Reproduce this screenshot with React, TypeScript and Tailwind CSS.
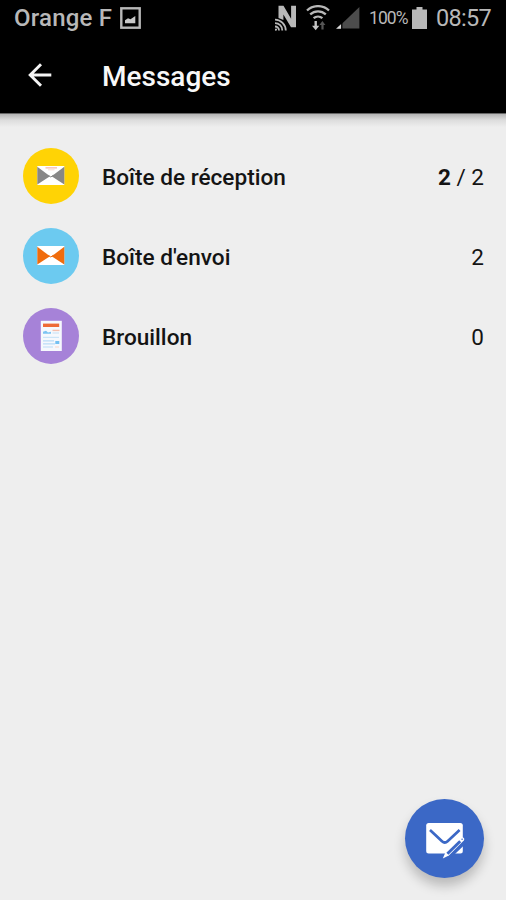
import React from 'react';

interface Folder {
  label: string;
  unread?: number;
  total: number;
  icon: React.ReactNode;
}

function EnvelopeIcon({ bg, side, letter }: { bg: string; side: string; letter?: boolean }) {
  return (
    <svg className="size-14 shrink-0" viewBox="0 0 56 56">
      <circle cx="28" cy="28" r="28" fill={bg} />
      <rect x="14.3" y="18" width="27" height="19" fill="#fff" />
      <path d="M14.3 18.8 27 28.3 14.3 36.6Z" fill={side} />
      <path d="M41.3 18.8 28.6 28.3 41.3 36.6Z" fill={side} />
      <path d="M25.3 27.3 27.8 29 30.3 27.3" fill="none" stroke={side} strokeWidth="1" />
      {letter && (
        <>
          <path d="M22.5 19.9h11.5" stroke="#f3a596" strokeWidth="1" />
          <path d="M25 21.8h6.5" stroke="#f8d0c8" strokeWidth="0.8" />
        </>
      )}
    </svg>
  );
}

function DraftIcon() {
  return (
    <svg className="size-14 shrink-0" viewBox="0 0 56 56">
      <circle cx="28" cy="28" r="28" fill="#a682d8" />
      <rect x="17.8" y="12.8" width="21" height="30.2" fill="#f6f8fd" />
      <rect x="20" y="15.6" width="16.2" height="3.4" fill="#ee6a36" />
      <path d="M29.5 22.4h7" stroke="#f5bfae" strokeWidth="1.4" />
      <path d="M20 25.8v-2l3-1 2 1.6 3-.6v2Z" fill="#7cc3f2" />
      <path d="M29.5 25h6.5" stroke="#c3dff5" strokeWidth="1" />
      <path d="M20 29.4h16" stroke="#cbe4f8" strokeWidth="1.2" />
      <path d="M20 32.8h11M20 35.8h12M20 39h10" stroke="#b9dcf7" strokeWidth="1.2" />
      <path d="M32 39h4" stroke="#f8d5c8" strokeWidth="1" />
      <rect x="32.3" y="33" width="4" height="3" fill="#74c0f2" />
    </svg>
  );
}

const folders: Folder[] = [
  {
    label: 'Boîte de réception',
    unread: 2,
    total: 2,
    icon: <EnvelopeIcon bg="#ffd305" side="#878787" letter />,
  },
  { label: "Boîte d'envoi", total: 2, icon: <EnvelopeIcon bg="#6ccaf0" side="#f06c0c" /> },
  { label: 'Brouillon', total: 0, icon: <DraftIcon /> },
];

function StatusBar() {
  return (
    <div className="flex h-[35px] items-center pl-3.5 pr-[14px] text-[#b8b8b8]">
      <span className="w-[106px] whitespace-nowrap text-[24px] leading-none font-medium tracking-[0.2px]">
        Orange F
      </span>
      <svg className="h-[22px] w-[21px]" viewBox="0 0 21 22">
        <rect x="1.3" y="1.3" width="18.4" height="19.4" fill="none" stroke="#b8b8b8" strokeWidth="2.4" />
        <path d="M5 16.3v-3l3-2 2.5 1 4.8-3.3v7.3Z" fill="#c8c8c8" />
      </svg>

      <div className="ml-auto flex items-center">
        {/* NFC */}
        <svg className="h-[26px] w-[23px]" viewBox="0 0 23 26">
          <path d="M3.5 13V.8h5l7.6 13V.8h4.9v21.4h-5L8.4 9.4V15Z" fill="#b8b8b8" />
          <g fill="none" stroke="#b8b8b8" strokeWidth="1.8">
            <path d="M0 14.6a11 11 0 0 1 10.8 10.8" />
            <path d="M0 18.1a7.3 7.3 0 0 1 7.3 7.3" />
            <path d="M0 21.5a4 4 0 0 1 4 4" />
          </g>
          <circle cx="1" cy="24.6" r="1.1" fill="#b8b8b8" />
        </svg>
        {/* Wi-Fi */}
        <svg className="ml-[8px] mr-px h-[26px] w-[24px]" viewBox="0 0 24 26">
          <g fill="none" stroke="#b8b8b8" strokeWidth="2.3">
            <path d="M1 5.5a16 16 0 0 1 22 0" />
            <path d="M4.2 9.4a11.5 11.5 0 0 1 15.6 0" />
            <path d="M7.6 13.2a6.8 6.8 0 0 1 8.8 0" />
          </g>
          <path d="M8.5 16h2.4v4.7h2.4l-3.6 4.6-3.7-4.6h2.5Z" fill="#c4c4c4" />
          <path d="M15.4 24.5v-4.4h-2l3-4 3 4h-1.8v4.4Z" fill="#565656" />
        </svg>
        {/* Signal */}
        <svg className="ml-[5px] h-[24px] w-[24px]" viewBox="0 0 24 24">
          <path d="M1 22.6 23.4 1v21.6Z" fill="#4c4c4c" />
          <path d="M0 22.8 5.2 18v4.8Z" fill="#d8d8d8" />
          <path d="M5.8 17v6" stroke="#000" strokeWidth="1.2" />
        </svg>
        <span className="ml-[9px] w-[43px] whitespace-nowrap pt-[3px] text-[17.5px] leading-none tracking-[-0.9px]">
          100%
        </span>
        {/* Battery */}
        <svg className="h-[22px] w-[15px]" viewBox="0 0 15 22">
          <path d="M4.5 0h6v2.6H15V22H0V2.6h4.5Z" fill="#b8b8b8" />
        </svg>
        <span className="ml-[9px] w-[56px] whitespace-nowrap pt-[2px] text-[23.5px] leading-none tracking-[-0.7px]">
          08:57
        </span>
      </div>
    </div>
  );
}

function AppBar() {
  return (
    <div className="flex h-[78px] items-center pt-[2px] pl-[28px]">
      <button className="w-[74px]" aria-label="Retour">
        <svg className="h-[24px] w-[24px]" viewBox="0 0 24 24">
          <path
            d="M23.3 12H2.5M13 1.3 2.2 12 13 22.7"
            fill="none"
            stroke="#f4f4f4"
            strokeWidth="2.9"
          />
        </svg>
      </button>
      <h1 className="pt-[4px] text-[28px] leading-none font-medium text-[#f8f8f8]">Messages</h1>
    </div>
  );
}

function FolderRow({ folder }: { folder: Folder }) {
  return (
    <li className="flex h-20 items-center pr-[22px] pl-[23px]">
      {folder.icon}
      <span className="ml-[23px] flex-1 pt-[3px] text-[22.6px] font-medium">{folder.label}</span>
      <span className="pt-[3px] text-[22.5px]">
        {folder.unread !== undefined && (
          <>
            <b className="font-bold">{folder.unread}</b> /{' '}
          </>
        )}
        {folder.total}
      </span>
    </li>
  );
}

export default function App() {
  return (
    <div className="relative flex h-[900px] w-[506px] flex-col overflow-hidden bg-[#eeeeee] font-['Roboto',sans-serif] text-[#141414]">
      <header className="bg-black">
        <StatusBar />
        <AppBar />
      </header>
      <div className="h-[14px] border-t border-[#666666] bg-linear-to-b from-[#b4b4b4] via-[#dcdcdc] via-45% to-[#eeeeee]" />
      <ul className="mt-[9px]">
        {folders.map((folder) => (
          <FolderRow key={folder.label} folder={folder} />
        ))}
      </ul>

      {/* Compose */}
      <button
        className="absolute right-[22px] bottom-[22px] size-[79px] rounded-full bg-[#3b68c6] shadow-[0_8px_12px_rgba(0,0,0,0.22)]"
        aria-label="Nouveau message"
      >
        <svg className="size-[79px]" viewBox="0 0 79 79">
          <rect x="21.2" y="24" width="36.6" height="30.4" rx="2.5" fill="#fff" />
          <path d="M25 31 37 42.2Q39.8 44.8 42.6 42.2L54.6 31" fill="none" stroke="#3b68c6" strokeWidth="2.7" />
          {/* gap between the sheet and the pencil */}
          <path d="M40 61.5 46.5 58.2 60.5 45V38.5L44 54.8Z" fill="#3b68c6" />
          <path
            d="M37.8 59.6 40.5 53.2 55.8 38.6Q57.2 37.6 58.6 38.8T58.8 41.6L43.8 56.6Z"
            fill="#fff"
          />
          <path d="M42.4 54.8 55.2 42.2" stroke="#3b68c6" strokeWidth="2.9" />
          <circle cx="57.1" cy="40.2" r="0.8" fill="#3b68c6" />
        </svg>
      </button>
    </div>
  );
}
